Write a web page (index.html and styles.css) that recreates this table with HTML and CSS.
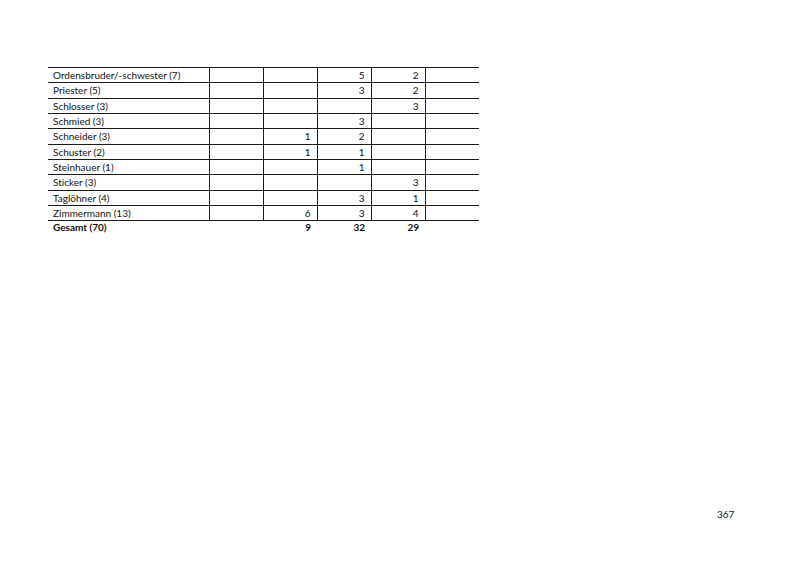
FILE: index.html
```html
<!DOCTYPE html>
<html lang="de">
<head>
<meta charset="utf-8">
<link rel="stylesheet" href="styles.css">
</head>
<body>
<div class="page">
  <table class="data">
    <colgroup>
      <col class="c-name"><col class="c-num"><col class="c-num"><col class="c-num"><col class="c-num"><col class="c-num">
    </colgroup>
    <tbody>
      <tr><td>Ordensbruder/-schwester (7)</td><td></td><td></td><td class="n">5</td><td class="n">2</td><td></td></tr>
      <tr><td>Priester (5)</td><td></td><td></td><td class="n">3</td><td class="n">2</td><td></td></tr>
      <tr><td>Schlosser (3)</td><td></td><td></td><td></td><td class="n">3</td><td></td></tr>
      <tr><td>Schmied (3)</td><td></td><td></td><td class="n">3</td><td></td><td></td></tr>
      <tr><td>Schneider (3)</td><td></td><td class="n">1</td><td class="n">2</td><td></td><td></td></tr>
      <tr><td>Schuster (2)</td><td></td><td class="n">1</td><td class="n">1</td><td></td><td></td></tr>
      <tr><td>Steinhauer (1)</td><td></td><td></td><td class="n">1</td><td></td><td></td></tr>
      <tr><td>Sticker (3)</td><td></td><td></td><td></td><td class="n">3</td><td></td></tr>
      <tr><td>Taglöhner (4)</td><td></td><td></td><td class="n">3</td><td class="n">1</td><td></td></tr>
      <tr><td>Zimmermann (13)</td><td></td><td class="n">6</td><td class="n">3</td><td class="n">4</td><td></td></tr>
      <tr class="total"><td>Gesamt (70)</td><td></td><td class="n">9</td><td class="n">32</td><td class="n">29</td><td></td></tr>
    </tbody>
  </table>
  <div class="pagenum">367</div>
</div>
</body>
</html>
```
FILE: styles.css
```css
html, body {
  margin: 0;
  padding: 0;
  background: #fff;
}
.page {
  width: 800px;
  height: 566px;
  position: relative;
  padding: 67px 0 0 48px;
  box-sizing: border-box;
  font-family: "Lato", "Liberation Sans", sans-serif;
  font-size: 10px;
  color: #111;
  font-variant-ligatures: none;
  font-feature-settings: "liga" 0, "dlig" 0;
}
.data {
  border-collapse: collapse;
  table-layout: fixed;
  width: 431px;
}
.c-name { width: 161px; }
.c-num { width: 54px; }
.data td {
  height: 14.33px;
  padding: 0 6px 0 5px;
  border-top: 1px solid #1a1a1a;
  border-left: 1px solid #1a1a1a;
  line-height: 14px;
  white-space: nowrap;
  overflow: hidden;
}
.data td:first-child {
  border-left: none;
}
.data td.n {
  text-align: right;
}
.data tr.total td {
  border-left: none;
  font-weight: 700;
  line-height: 12px;
  vertical-align: top;
}
.pagenum {
  position: absolute;
  left: 717px;
  top: 508px;
  font-size: 10px;
}
```
